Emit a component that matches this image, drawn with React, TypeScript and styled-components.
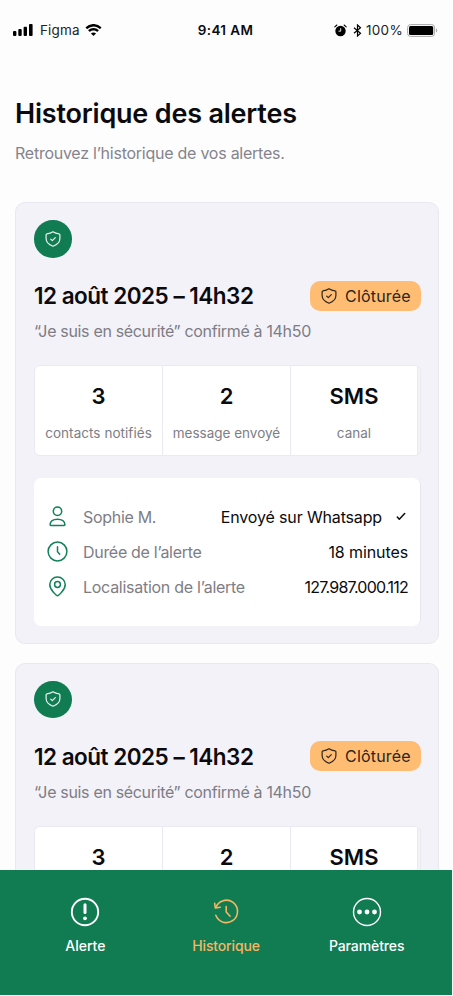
import React from "react";
import styled, { createGlobalStyle } from "styled-components";

const GlobalStyle = createGlobalStyle`
  * { box-sizing: border-box; }
  body { margin: 0; background: #fff; }
`;

const Screen = styled.div`
  width: 453px;
  height: 996px;
  overflow: hidden;
  display: flex;
  flex-direction: column;
  background: #fdfdfe;
  font-family: Inter, "Liberation Sans", sans-serif;
  color: #0b0b0f;
`;

const Text = styled.span<{ $size: number; $weight?: number; $track?: number; $color?: string }>`
  display: block;
  white-space: nowrap;
  line-height: 20px;
  font-size: ${(p) => p.$size}px;
  font-weight: ${(p) => p.$weight ?? 400};
  letter-spacing: ${(p) => p.$track ?? 0}px;
  color: ${(p) => p.$color ?? "#0b0b0f"};
`;

const StatusBar = styled.header`
  flex: none;
  height: 60px;
  display: grid;
  grid-template-columns: 1fr auto 1fr;
  align-items: center;
  padding: 0 15px 0 13px;
`;

const StatusGroup = styled.div<{ $end?: boolean }>`
  display: flex;
  align-items: center;
  justify-content: ${(p) => (p.$end ? "flex-end" : "flex-start")};
`;

const Gap = styled.span<{ $w: number }>`
  flex: none;
  width: ${(p) => p.$w}px;
`;

const Content = styled.main`
  flex: none;
  height: 810px;
  overflow: hidden;
  padding: 38px 14px 0 15px;
`;

const Heading = styled.h1`
  margin: 0;
  font-size: 27px;
  line-height: 32px;
  font-weight: 600;
  letter-spacing: -0.200px;
  white-space: nowrap;
`;

const Intro = styled.div`
  margin: 13px 0 39px;
`;

const Card = styled.article`
  height: 442px;
  margin-bottom: 18.500px;
  padding: 17px 17px 0 18px;
  background: #f3f2f8;
  border: 1px solid #e9e8f0;
  border-radius: 10px;
`;

const ShieldDisc = styled.div`
  width: 37.500px;
  height: 37.500px;
  border-radius: 50%;
  background: #117b52;
  display: flex;
  align-items: center;
  justify-content: center;
`;

const CardTitleRow = styled.div`
  margin-top: 22.500px;
  height: 31px;
  display: flex;
  align-items: center;
  justify-content: space-between;
`;

const CardTitle = styled.div`
  padding-top: 1px;
`;

const Pill = styled.div`
  width: 111px;
  height: 30px;
  padding-left: 11px;
  display: flex;
  align-items: center;
  gap: 8px;
  border-radius: 10px;
  background: #ffbd73;
`;

const Confirmation = styled.div`
  margin-top: 10px;
`;

const Stats = styled.div`
  margin-top: 24px;
  height: 91px;
  padding-right: 2px;
  display: grid;
  grid-template-columns: 128px 128px 1fr;
  border: 1px solid #ebeaf2;
  border-radius: 6px;
  overflow: hidden;
`;

const Stat = styled.div`
  padding-top: 20px;
  display: flex;
  flex-direction: column;
  align-items: center;
  gap: 17px;
  background: #fff;
  border-right: 1px solid #ebeaf2;
`;

const Details = styled.div`
  margin-top: 22px;
  height: 148px;
  padding: 21px 12px 0 13px;
  background: #fff;
  border-right: 1px solid #e8e7f0;
  border-radius: 7px;
`;

const DetailRow = styled.div`
  height: 35px;
  display: flex;
  align-items: center;
`;

const Value = styled.div`
  margin-left: auto;
  display: flex;
  align-items: center;
  gap: 14px;
`;

const CheckSlot = styled.span`
  display: flex;
  padding-right: 2px;
`;

const TabBar = styled.nav`
  flex: none;
  width: 452px;
  height: 125px;
  padding: 27px 15px 0;
  display: grid;
  grid-template-columns: repeat(3, 1fr);
  background: #117b52;
`;

const Tab = styled.div`
  display: flex;
  flex-direction: column;
  align-items: center;
  gap: 9px;
`;

const Signal = () => (
  <svg width="20" height="12" viewBox="0 0 20 12" fill="#000">
    <rect x="0" y="7" width="3.4" height="5" rx="1" />
    <rect x="5.3" y="5" width="3.4" height="7" rx="1" />
    <rect x="10.6" y="2.8" width="3.4" height="9.2" rx="1" />
    <rect x="16" y="0" width="3.6" height="12" rx="1" />
  </svg>
);

const Wifi = () => (
  <svg width="17" height="12" viewBox="0 0 17 12" fill="#000">
    <path d="M8.5 2.4c2.4 0 4.6.9 6.2 2.5.1.1.3.1.4 0l1.3-1.3c.1-.1.1-.3 0-.4A11.300 11.300 0 0 0 .6 3.200c-.1.1-.1.3 0 .4l1.300 1.300c.1.1.3.1.4 0A9 9 0 0 1 8.500 2.400Z" />
    <path d="M8.500 6.400c1.300 0 2.600.5 3.500 1.400.1.1.3.1.4 0l1.300-1.400c.1-.1.1-.3 0-.4a7.500 7.500 0 0 0-10.400 0c-.1.1-.1.3 0 .4l1.300 1.400c.1.1.3.1.4 0 .9-.9 2.200-1.400 3.500-1.400Z" />
    <path d="M8.500 8.500c-.9 0-1.700.3-2.300.8-.2.1-.2.3 0 .4l2.100 2.100c.1.1.3.1.4 0l2.100-2.100c.2-.1.2-.3 0-.4-.6-.5-1.400-.8-2.300-.8Z" />
  </svg>
);

const Alarm = () => (
  <svg width="13" height="13" viewBox="0 0 13 13" fill="none">
    <circle cx="6.500" cy="7" r="5.200" fill="#000" />
    <path d="M.8 2.800 2.900 1M12.200 2.800 10.100 1" stroke="#000" strokeWidth="1.100" strokeLinecap="round" />
    <path d="M6.700 4.200v3H4.500" stroke="#fff" strokeWidth=".9" />
  </svg>
);

const Bluetooth = () => (
  <svg width="9" height="13" viewBox="0 0 9 13" fill="none" stroke="#000" strokeWidth="1.200">
    <path d="m1 3.700 6.500 5.500-3 2.800V1l3 2.800L1 9.300" />
  </svg>
);

const Battery = () => (
  <svg width="31" height="13" viewBox="0 0 31 13">
    <rect x=".6" y=".6" width="27" height="11.800" rx="3" fill="none" stroke="#a7a7a9" strokeWidth="1" />
    <rect x="2" y="2" width="24.200" height="9" rx="1.500" fill="#000" />
    <path d="M29 4.500v4c1.600-.7 1.600-3.300 0-4Z" fill="#a7a7a9" />
  </svg>
);

const Shield = ({ color }: { color: string }) => (
  <svg width="16" height="16" viewBox="0 0 16 16" fill="none" stroke={color} strokeWidth="1.200" strokeLinecap="round" strokeLinejoin="round">
    <path d="M8 .8c1.700 1.200 3.900 1.900 6 2 .6 0 .9.3.9.9v3.800c0 4-3 6.300-6.900 7.800C4.100 13.800 1.100 11.500 1.100 7.500V3.700c0-.6.3-.9.9-.9 2.100-.1 4.300-.8 6-2Z" />
    <path d="m5.700 8.100 1.600 1.500 3-3" />
  </svg>
);

const Check = () => (
  <svg width="10" height="9" viewBox="0 0 10 9" fill="none" stroke="#0b0b0f" strokeWidth="1.500" strokeLinecap="round" strokeLinejoin="round">
    <path d="m1.300 5 2 2.200L8.700 1.500" />
  </svg>
);

const iconProps = { width: 21, height: 21, viewBox: "0 0 21 21", fill: "none", stroke: "#128058", strokeWidth: 1.500, strokeLinecap: "round", strokeLinejoin: "round" } as const;

const Person = () => (
  <svg {...iconProps}>
    <circle cx="10.500" cy="5.300" r="4.200" />
    <path d="M3.800 19.500c-.4 0-.7-.3-.7-.7 0-3.400 3-5.600 7.400-5.600s7.400 2.200 7.400 5.600c0 .4-.3.7-.7.7Z" />
  </svg>
);

const Clock = () => (
  <svg {...iconProps}>
    <circle cx="10.500" cy="10.500" r="9.400" />
    <path d="M10.500 5.800v5l2.200 2.400" />
  </svg>
);

const Pin = () => (
  <svg {...iconProps}>
    <path d="M10.500 19.700c-.6 0-7.700-5.400-7.700-11.200a7.700 7.500 0 0 1 15.400 0c0 5.800-7.100 11.200-7.700 11.200Z" />
    <circle cx="10.500" cy="8.500" r="2.900" />
  </svg>
);

const AlertIcon = () => (
  <svg width="30" height="30" viewBox="0 0 30 30" fill="none" stroke="#fff">
    <circle cx="15" cy="15" r="13.200" strokeWidth="1.900" />
    <path d="M15 7.800v7.800" strokeWidth="3" strokeLinecap="round" />
    <circle cx="15" cy="21.300" r="1.900" fill="#fff" stroke="none" />
  </svg>
);

const HistoryIcon = () => (
  <svg width="30" height="30" viewBox="0 0 30 30" fill="none" stroke="#f3b765" strokeWidth="1.600" strokeLinecap="round" strokeLinejoin="round">
    <path d="M4.800 10.500A11.200 11.200 0 1 1 4.800 18.300" />
    <path d="M3.700 6.300 4.300 11l4.900-.7" />
    <path d="M15.200 9.500v5.500l3.900 4.200" />
  </svg>
);

const MoreIcon = () => (
  <svg width="30" height="30" viewBox="0 0 30 30" fill="#fff">
    <circle cx="15" cy="15" r="13.500" fill="none" stroke="#fff" strokeWidth="1.400" />
    <circle cx="7.500" cy="15" r="2.400" />
    <circle cx="15" cy="15" r="2.400" />
    <circle cx="22.500" cy="15" r="2.400" />
  </svg>
);

const stats = [
  { value: "3", label: "contacts notifiés", track: 0.050 },
  { value: "2", label: "message envoyé", track: 0 },
  { value: "SMS", label: "canal", track: 0 },
];

const AlertCard = () => (
  <Card>
    <ShieldDisc><Shield color="#e9f5ef" /></ShieldDisc>
    <CardTitleRow>
      <CardTitle><Text $size={22.500} $weight={600} $track={-0.500}>12 août 2025 – 14h32</Text></CardTitle>
      <Pill>
        <Shield color="#2c251b" />
        <Text $size={16} $track={0.200} $color="#2c251b">Clôturée</Text>
      </Pill>
    </CardTitleRow>
    <Confirmation>
      <Text $size={16} $track={-0.330} $color="#7e7d85">“Je suis en sécurité” confirmé à 14h50</Text>
    </Confirmation>
    <Stats>
      {stats.map((s) => (
        <Stat key={s.label}>
          <Text $size={22} $weight={600} $track={0}>{s.value}</Text>
          <Text $size={13.500} $track={s.track} $color="#7e7d85">{s.label}</Text>
        </Stat>
      ))}
    </Stats>
    <Details>
      <DetailRow>
        <Person /><Gap $w={15} />
        <Text $size={16} $track={-0.300} $color="#7e7d85">Sophie M.</Text>
        <Value><Text $size={16} $track={-0.150}>Envoyé sur Whatsapp</Text><CheckSlot><Check /></CheckSlot></Value>
      </DetailRow>
      <DetailRow>
        <Clock /><Gap $w={15} />
        <Text $size={16} $track={-0.300} $color="#7e7d85">Durée de l’alerte</Text>
        <Value><Text $size={16} $track={-0.100}>18 minutes</Text></Value>
      </DetailRow>
      <DetailRow>
        <Pin /><Gap $w={15} />
        <Text $size={16} $track={-0.270} $color="#7e7d85">Localisation de l’alerte</Text>
        <Value><Text $size={16} $track={-0.750}>127.987.000.112</Text></Value>
      </DetailRow>
    </Details>
  </Card>
);

export default function App() {
  return (
    <>
      <GlobalStyle />
      <Screen>
        <StatusBar>
          <StatusGroup>
            <Signal /><Gap $w={7} />
            <Text $size={13.500} $track={0.150} $color="#222">Figma</Text><Gap $w={5} />
            <Wifi />
          </StatusGroup>
          <Text $size={13.500} $weight={600} $track={0.400}>9:41 AM</Text>
          <StatusGroup $end>
            <Alarm /><Gap $w={6} />
            <Bluetooth /><Gap $w={4} />
            <Text $size={13.500} $track={0.300} $color="#222">100%</Text><Gap $w={4} />
            <Battery />
          </StatusGroup>
        </StatusBar>
        <Content>
          <Heading>Historique des alertes</Heading>
          <Intro><Text $size={16} $color="#85848c" $track={-0.250}>Retrouvez l’historique de vos alertes.</Text></Intro>
          <AlertCard />
          <AlertCard />
        </Content>
        <TabBar>
          <Tab><AlertIcon /><Text $size={14} $weight={500} $color="#fff">Alerte</Text></Tab>
          <Tab><HistoryIcon /><Text $size={14} $weight={500} $track={-0.150} $color="#f3b765">Historique</Text></Tab>
          <Tab><MoreIcon /><Text $size={14} $weight={500} $track={-0.100} $color="#fff">Paramètres</Text></Tab>
        </TabBar>
      </Screen>
    </>
  );
}
